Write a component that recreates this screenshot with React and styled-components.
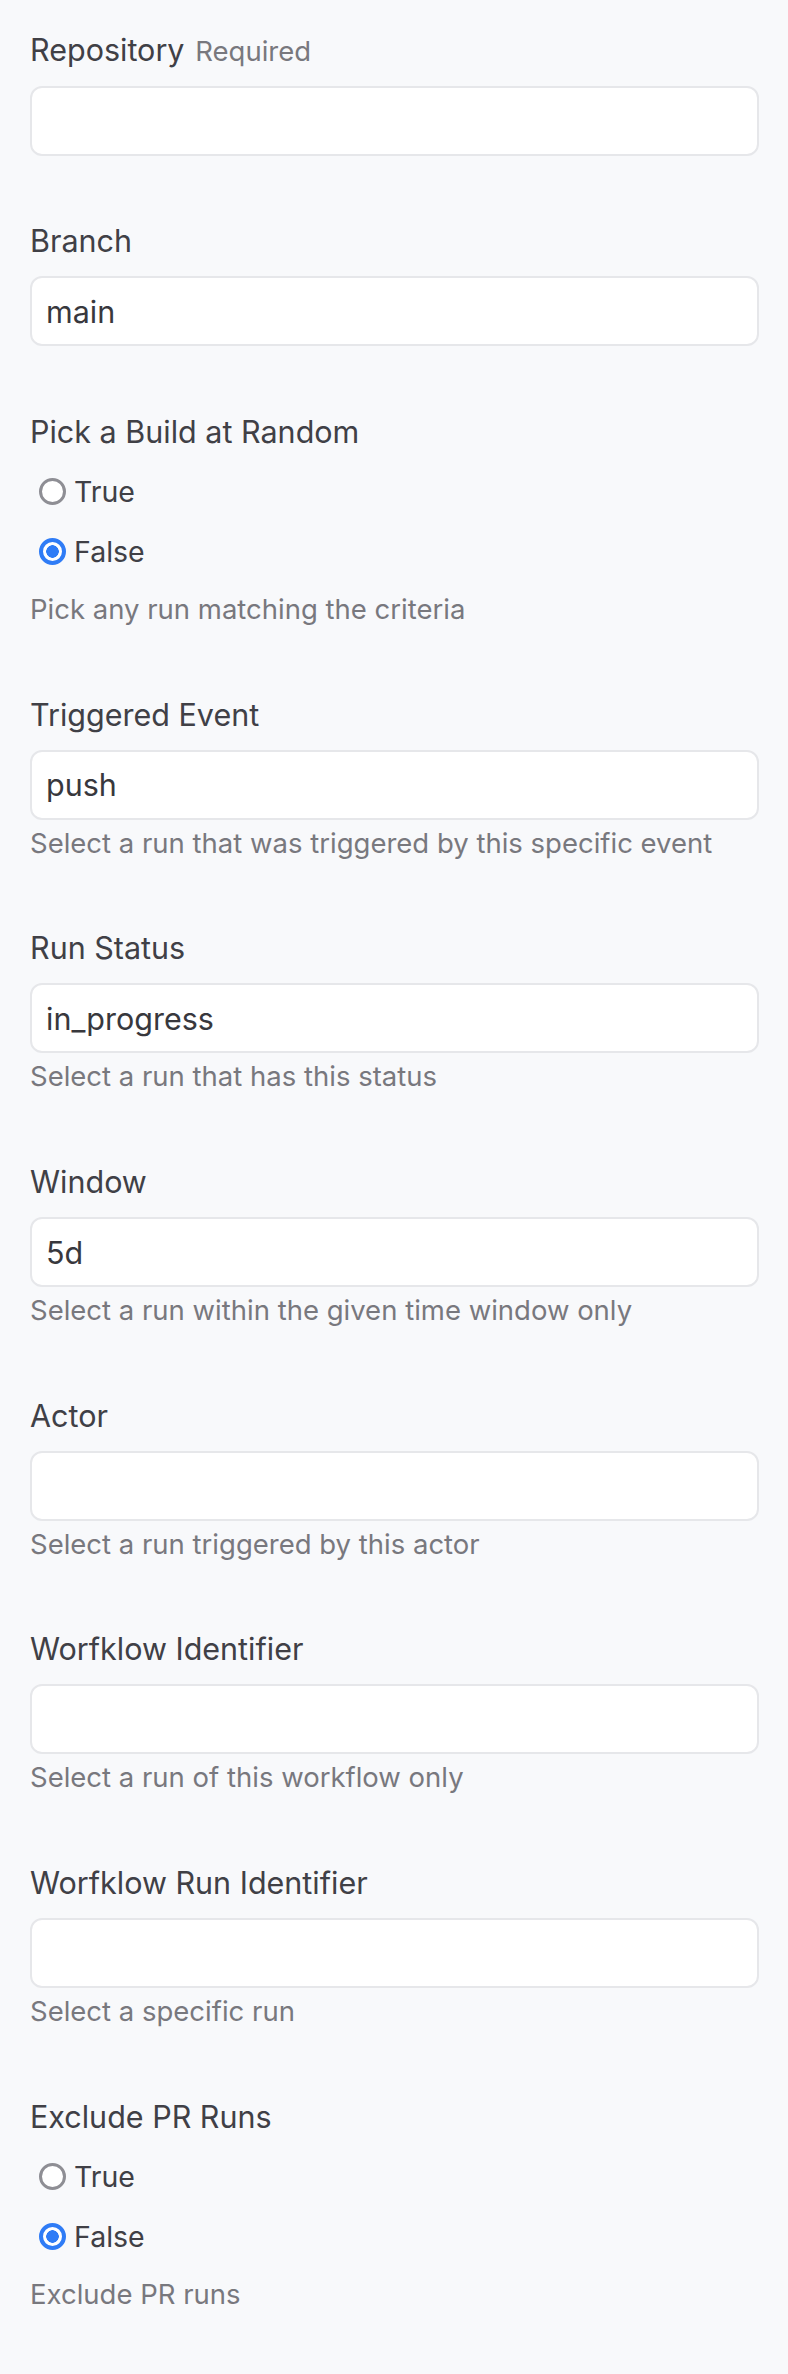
import React, { useState } from 'react';
import styled, { createGlobalStyle } from 'styled-components';

const GlobalStyle = createGlobalStyle`
  html, body {
    margin: 0;
    padding: 0;
    background: #f8f9fb;
  }
  * {
    box-sizing: border-box;
  }
`;

const Page = styled.form`
  min-height: 100vh;
  padding: 26.6px 29px 40px 30px;
  background: #f8f9fb;
  font-family: Inter, "Noto Sans", sans-serif;
  display: flex;
  flex-direction: column;
  gap: 62.7px;
`;

const Field = styled.div`
  display: flex;
  flex-direction: column;
`;

const Label = styled.label`
  font-size: 30.5px;
  line-height: 46px;
  color: #404046;
  margin-bottom: 12px;
`;

const Hint = styled.span`
  font-size: 27.5px;
  color: #78787e;
  margin-left: 3px;
`;

const TextInput = styled.input`
  height: 70px;
  width: 100%;
  padding: 0 14px;
  border: 2px solid #e6e7ea;
  border-radius: 12px;
  background: #fff;
  font-family: inherit;
  font-size: 30.5px;
  color: #38383d;
  outline: none;
`;

const Help = styled.div`
  font-size: 27.5px;
  line-height: 40px;
  color: #78787e;
  margin-top: ${(p) => (p.$afterRadios ? '7px' : '3px')};
`;

const Options = styled.div`
  display: flex;
  flex-direction: column;
  margin-top: -5px;
`;

const Option = styled.label`
  height: 60px;
  display: flex;
  align-items: center;
  gap: 8px;
  padding-left: 9px;
  font-size: 28.5px;
  color: #404046;
  cursor: pointer;
`;

const Radio = styled.input.attrs({ type: 'radio' })`
  appearance: none;
  margin: 0;
  width: 27px;
  height: 27px;
  border-radius: 50%;
  border: 3px solid #8e8e94;
  background: #fff;
  flex-shrink: 0;

  &:checked {
    border: 4px solid #2f7cf6;
    background: radial-gradient(circle, #2f7cf6 0 6px, #fff 6.5px);
  }
`;

const fields = [
  { id: 'repository', label: 'Repository', required: true, value: '' },
  { id: 'branch', label: 'Branch', value: 'main' },
  {
    id: 'random',
    label: 'Pick a Build at Random',
    radio: true,
    value: 'false',
    help: 'Pick any run matching the criteria',
  },
  {
    id: 'event',
    label: 'Triggered Event',
    value: 'push',
    help: 'Select a run that was triggered by this specific event',
  },
  { id: 'status', label: 'Run Status', value: 'in_progress', help: 'Select a run that has this status' },
  { id: 'window', label: 'Window', value: '5d', help: 'Select a run within the given time window only' },
  { id: 'actor', label: 'Actor', value: '', help: 'Select a run triggered by this actor' },
  { id: 'workflow', label: 'Worfklow Identifier', value: '', help: 'Select a run of this workflow only' },
  { id: 'runId', label: 'Worfklow Run Identifier', value: '', help: 'Select a specific run' },
  { id: 'excludePr', label: 'Exclude PR Runs', radio: true, value: 'false', help: 'Exclude PR runs' },
];

function RadioField({ field }) {
  const [choice, setChoice] = useState(field.value);
  return (
    <Field>
      <Label as="div">{field.label}</Label>
      <Options>
        {['true', 'false'].map((opt) => (
          <Option key={opt}>
            <Radio
              name={field.id}
              value={opt}
              checked={choice === opt}
              onChange={() => setChoice(opt)}
            />
            {opt === 'true' ? 'True' : 'False'}
          </Option>
        ))}
      </Options>
      <Help $afterRadios>{field.help}</Help>
    </Field>
  );
}

export default function App() {
  return (
    <>
      <GlobalStyle />
      <Page onSubmit={(e) => e.preventDefault()}>
        {fields.map((field) =>
          field.radio ? (
            <RadioField key={field.id} field={field} />
          ) : (
            <Field key={field.id}>
              <Label htmlFor={field.id}>
                {field.label}
                {field.required && <Hint> Required</Hint>}
              </Label>
              <TextInput id={field.id} defaultValue={field.value} />
              {field.help && <Help>{field.help}</Help>}
            </Field>
          )
        )}
      </Page>
    </>
  );
}
